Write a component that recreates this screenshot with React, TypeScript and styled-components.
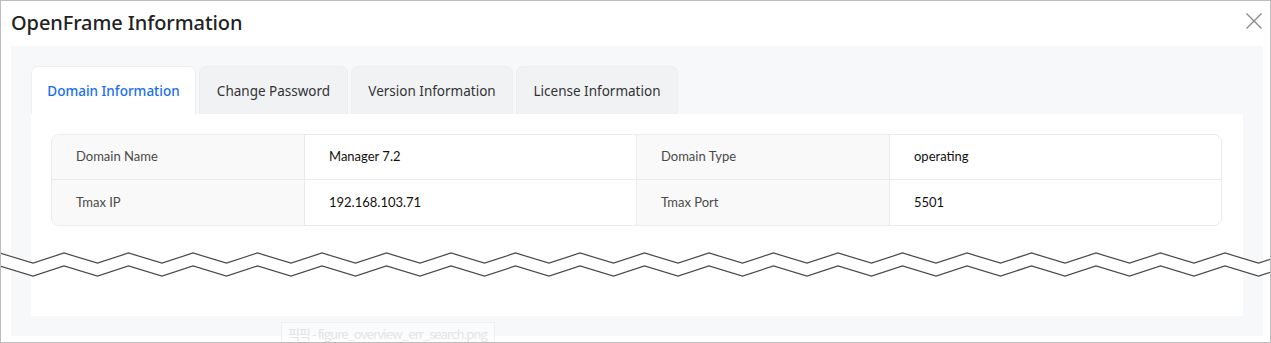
import React from "react";
import styled, { createGlobalStyle } from "styled-components";

const Global = createGlobalStyle`
  html, body { margin: 0; padding: 0; background: #fff; }
  * { box-sizing: border-box; }
`;

const Frame = styled.div`
  position: relative;
  width: 1271px;
  height: 343px;
  border: 1px solid #bdbdbd;
  background: #fff;
  overflow: hidden;
  font-family: "Noto Sans", "Noto Sans CJK KR", sans-serif;
`;

const Header = styled.div`
  height: 45px;
  display: flex;
  align-items: center;
  padding: 0 0 2px 10px;
`;

const Title = styled.h1`
  margin: 0;
  font-size: 20px;
  font-weight: 500;
  color: #222;
  letter-spacing: -0.1px;
`;

const Close = styled.button`
  position: absolute;
  top: 11px;
  right: 7px;
  width: 18px;
  height: 18px;
  padding: 0;
  border: 0;
  background: none;
  display: flex;
`;

const Panel = styled.div`
  margin: 0 7px 0 10px;
  height: 290px;
  background: #f7f8fa;
  padding: 20px 20px 20px 20px;
  display: flex;
  flex-direction: column;
`;

const Tabs = styled.div`
  display: flex;
  gap: 3px;
  height: 48px;
`;

const Tab = styled.div<{ $active?: boolean; $w: number }>`
  width: ${(p) => p.$w}px;
  display: flex;
  align-items: center;
  justify-content: center;
  border-radius: 7px 7px 0 0;
  border: 1px solid #eceef1;
  border-bottom: 0;
  background: ${(p) => (p.$active ? "#fff" : "#f1f2f4")};
  color: ${(p) => (p.$active ? "#1a6df3" : "#333")};
  font-size: 13.5px;
  font-weight: ${(p) => (p.$active ? 500 : 400)};
`;

const Content = styled.div`
  flex: 1;
  background: #fff;
  padding: 20px 21px 0 20px;
`;

const Table = styled.div`
  display: grid;
  grid-template-columns: 253px 332px 253px 1fr;
  grid-auto-rows: 45px;
  border: 1px solid #ebebeb;
  border-radius: 8px;
  overflow: hidden;
  font-family: Lato, "Noto Sans", sans-serif;
  font-size: 13px;
`;

const Cell = styled.div<{ $label?: boolean; $last?: boolean; $bottom?: boolean }>`
  display: flex;
  align-items: center;
  padding-left: 24px;
  padding-bottom: 2px;
  background: ${(p) => (p.$label ? "#f9f9f9" : "#fff")};
  color: ${(p) => (p.$label ? "#4a4a4a" : "#111")};
  border-right: ${(p) => (p.$last ? "0" : "1px solid #ebebeb")};
  border-bottom: ${(p) => (p.$bottom ? "0" : "1px solid #ebebeb")};
`;

const Wave = styled.svg`
  position: absolute;
  left: -1px;
  top: 246px;
`;

const Watermark = styled.div`
  position: absolute;
  left: 280px;
  top: 321px;
  height: 24px;
  width: 214px;
  padding: 0 6px;
  border: 1px solid #efefef;
  color: #e4e4e4;
  font-family: "Noto Sans CJK KR", "Noto Sans", sans-serif;
  font-size: 13px;
  letter-spacing: -0.9px;
  line-height: 21px;
  white-space: nowrap;
  overflow: hidden;
  background: rgba(255, 255, 255, 0.4);
`;

function zigzag(offsetY: number) {
  const pts: string[] = [];
  for (let k = -1; k < 22; k++) {
    const t = 33 + 64.5 * k;
    pts.push(`${t},${offsetY + 16}`);
    pts.push(`${t + 31},${offsetY + 6}`);
  }
  return pts;
}

const rows = [
  ["Domain Name", "Manager 7.2", "Domain Type", "operating"],
  ["Tmax IP", "192.168.103.71", "Tmax Port", "5501"],
];

export default function App() {
  const top = zigzag(0);
  const bottom = zigzag(13);
  const band = [...top, ...[...bottom].reverse()].join(" ");
  return (
    <>
      <Global />
      <Frame>
        <Header>
          <Title>OpenFrame Information</Title>
        </Header>
        <Close aria-label="close">
          <svg width="18" height="18" viewBox="0 0 18 18">
            <path d="M1.5 1.5 L16.5 16.5 M16.5 1.5 L1.5 16.5" stroke="#8a8a8a" strokeWidth="1.4" fill="none" />
          </svg>
        </Close>
        <Panel>
          <Tabs>
            <Tab $active $w={165}>Domain Information</Tab>
            <Tab $w={149}>Change Password</Tab>
            <Tab $w={162}>Version Information</Tab>
            <Tab $w={162}>License Information</Tab>
          </Tabs>
          <Content>
            <Table>
              {rows.map((r, i) =>
                r.map((c, j) => (
                  <Cell key={`${i}-${j}`} $label={j % 2 === 0} $last={j === 3} $bottom={i === 1}>
                    {c}
                  </Cell>
                ))
              )}
            </Table>
          </Content>
        </Panel>
        <Wave width="1273" height="40" viewBox="0 0 1273 40">
          <polygon points={band} fill="#fff" />
          <polyline points={top.join(" ")} fill="none" stroke="#4a4a4a" strokeWidth="1.2" />
          <polyline points={bottom.join(" ")} fill="none" stroke="#4a4a4a" strokeWidth="1.2" />
        </Wave>
        <Watermark>픽픽 - figure_overview_err_search.png</Watermark>
      </Frame>
    </>
  );
}
